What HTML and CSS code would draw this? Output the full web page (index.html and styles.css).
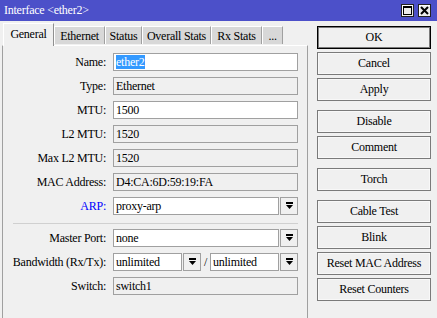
FILE: index.html
```html
<!DOCTYPE html>
<html>
<head>
<meta charset="utf-8">
<title>Interface &lt;ether2&gt;</title>
<link rel="stylesheet" href="styles.css">
</head>
<body>
<div class="window">
  <div class="titlebar">
    <span class="title">Interface &lt;ether2&gt;</span>
    <div class="tbtns">
      <span class="tbtn">
        <svg width="11" height="11" viewBox="0 0 11 11"><rect x="1.5" y="1.5" width="8" height="8" fill="none" stroke="#000" stroke-width="1"/><rect x="1" y="1" width="9" height="2" fill="#000"/></svg>
      </span>
      <span class="tbtn">
        <svg width="11" height="11" viewBox="0 0 11 11"><path d="M2 2 L9 9 M9 2 L2 9" stroke="#000" stroke-width="2"/></svg>
      </span>
    </div>
  </div>
  <div class="body">
    <div class="left">
      <div class="tabs">
        <span class="tab active w-general">General</span>
        <span class="tab w-ethernet">Ethernet</span>
        <span class="tab w-status">Status</span>
        <span class="tab w-overall">Overall Stats</span>
        <span class="tab w-rx">Rx Stats</span>
        <span class="tab w-more">...</span>
      </div>
      <div class="panel">
        <div class="row"><label>Name:</label><div class="field edit"><span class="sel">ether2</span></div></div>
        <div class="row"><label>Type:</label><div class="field ro">Ethernet</div></div>
        <div class="row"><label>MTU:</label><div class="field edit">1500</div></div>
        <div class="row"><label>L2 MTU:</label><div class="field ro">1520</div></div>
        <div class="row"><label>Max L2 MTU:</label><div class="field ro">1520</div></div>
        <div class="row"><label>MAC Address:</label><div class="field ro">D4:CA:6D:59:19:FA</div></div>
        <div class="row"><label class="link">ARP:</label>
          <div class="combo"><div class="field edit">proxy-arp</div><span class="dd"><svg width="9" height="8" viewBox="0 0 9 8"><rect x="1" y="0" width="7" height="2" fill="#000"/><path d="M1 3 H8 L4.5 7 Z" fill="#000"/></svg></span></div>
        </div>
        <div class="sep"></div>
        <div class="row"><label>Master Port:</label>
          <div class="combo"><div class="field edit">none</div><span class="dd"><svg width="9" height="8" viewBox="0 0 9 8"><rect x="1" y="0" width="7" height="2" fill="#000"/><path d="M1 3 H8 L4.5 7 Z" fill="#000"/></svg></span></div>
        </div>
        <div class="row"><label>Bandwidth (Rx/Tx):</label>
          <div class="combo bw">
            <div class="field edit half">unlimited</div><span class="dd"><svg width="9" height="8" viewBox="0 0 9 8"><rect x="1" y="0" width="7" height="2" fill="#000"/><path d="M1 3 H8 L4.5 7 Z" fill="#000"/></svg></span>
            <span class="slash">/</span>
            <div class="field edit half">unlimited</div><span class="dd"><svg width="9" height="8" viewBox="0 0 9 8"><rect x="1" y="0" width="7" height="2" fill="#000"/><path d="M1 3 H8 L4.5 7 Z" fill="#000"/></svg></span>
          </div>
        </div>
        <div class="row"><label>Switch:</label><div class="field ro">switch1</div></div>
      </div>
    </div>
    <div class="right">
      <div class="group">
        <span class="btn default">OK</span>
        <span class="btn">Cancel</span>
        <span class="btn">Apply</span>
      </div>
      <div class="group">
        <span class="btn">Disable</span>
        <span class="btn">Comment</span>
      </div>
      <div class="group">
        <span class="btn">Torch</span>
      </div>
      <div class="group">
        <span class="btn">Cable Test</span>
        <span class="btn">Blink</span>
        <span class="btn">Reset MAC Address</span>
        <span class="btn">Reset Counters</span>
      </div>
    </div>
  </div>
</div>
</body>
</html>
```
FILE: styles.css
```css
* { box-sizing: border-box; }
html, body { margin: 0; padding: 0; }
body {
  background: #f0f0f0;
  font-family: "Liberation Serif", "Times New Roman", serif;
  font-size: 12px;
  letter-spacing: -0.25px;
  color: #000;
}
.window {
  width: 437px;
  height: 318px;
  overflow: hidden;
  background: #f0f0f0;
}
.titlebar {
  height: 21px;
  background: #4c50c9;
  color: #fff;
  display: flex;
  align-items: center;
  justify-content: space-between;
  padding: 0 6px 0 4px;
}
.title { font-size: 12px; line-height: 21px; }
.tbtns { display: flex; gap: 4px; }
.tbtn {
  width: 13px;
  height: 13px;
  background: #ececec;
  border: 1px solid #222;
  box-shadow: inset 1px 1px 0 #fff;
  display: flex;
  align-items: center;
  justify-content: center;
}
.tbtn svg { display: block; }
.body { display: flex; }
.left { width: 308px; padding-left: 2px; }
.tabs {
  display: flex;
  align-items: flex-end;
  height: 24px;
  padding-left: 1px;
  position: relative;
  z-index: 1;
}
.tab {
  height: 18px;
  margin-bottom: 1px;
  background: #d8d8d8;
  border-top: 1px solid #fff;
  border-left: 1px solid #fff;
  border-right: 1px solid #a0a0a0;
  display: flex;
  align-items: center;
  justify-content: center;
  line-height: 1;
  padding-top: 1px;
}
.tab.active {
  height: 23px;
  margin-bottom: -1px;
  background: #f0f0f0;
  border-right: 1px solid #909090;
  padding-top: 0;
  padding-bottom: 3px;
}
.w-general { width: 51px; }
.w-ethernet { width: 51px; }
.w-status { width: 37px; }
.w-overall { width: 69px; }
.w-rx { width: 51px; }
.w-more { width: 21px; }
.panel {
  border-top: 1px solid #fff;
  border-left: 1px solid #a0a0a0;
  border-right: 1px solid #a0a0a0;
  height: 300px;
  padding: 7px 9px 0 0;
  display: flex;
  flex-direction: column;
  gap: 6px;
}
.row {
  display: grid;
  grid-template-columns: 103px 1fr;
  column-gap: 7px;
  align-items: center;
  height: 18px;
}
.row label {
  text-align: right;
  white-space: nowrap;
}
.row label.link { color: #0000ff; }
.field {
  height: 18px;
  border: 1px solid #a0a0a0;
  padding: 0 2px;
  line-height: 16px;
  white-space: nowrap;
  overflow: hidden;
}
.field.edit { background: #fff; }
.field.ro { background: #f0f0f0; }
.sel {
  background: #3399ff;
  color: #fff;
  display: inline-block;
  line-height: 14px;
  margin-top: 1px;
  padding-right: 1px;
}
.combo {
  display: flex;
  gap: 1px;
  align-items: center;
}
.combo > .field { flex: 1; }
.combo.bw > .field.half { flex: 0 0 69px; }
.dd {
  flex: 0 0 18px;
  height: 18px;
  border: 1px solid #a0a0a0;
  background: #f0f0f0;
  display: flex;
  align-items: center;
  justify-content: center;
}
.dd svg { display: block; }
.slash {
  flex: 0 0 7px;
  text-align: center;
}
.sep {
  height: 4px;
  margin: -1px 0 -1px 10px;
  border-bottom: 1px solid #d0d0d0;
}
.right {
  margin-left: 9px;
  width: 114px;
  padding-top: 5px;
  display: flex;
  flex-direction: column;
  gap: 9px;
}
.group { display: flex; flex-direction: column; gap: 3px; }
.btn {
  height: 23px;
  border: 1px solid #7a7a7a;
  box-shadow: inset 0 0 0 1px #f8f8f8;
  background: #f0f0f0;
  display: flex;
  align-items: center;
  justify-content: center;
  white-space: nowrap;
}
.btn.default {
  border: 1px solid #000;
  box-shadow: inset 0 0 0 1px #7a7a7a;
}
```
